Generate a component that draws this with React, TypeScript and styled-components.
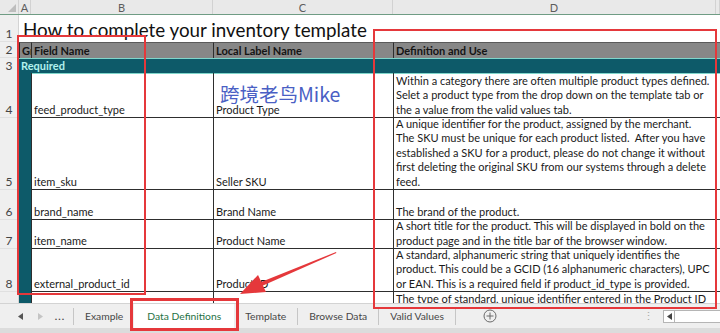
import React from 'react';
import styled, { createGlobalStyle } from 'styled-components';

const COLS = '19px 12px 182px 180px 323px 4px';
const TEAL = '#0d5a69';
const RED = '#e5383b';

const GlobalStyle = createGlobalStyle`
  html, body { margin: 0; padding: 0; background: #fff; }
  body { font-family: Lato, "Liberation Sans", sans-serif; }
`;

const Window = styled.div`
  position: relative;
  width: 720px;
  height: 333px;
  overflow: hidden;
  display: flex;
  flex-direction: column;
  background: #fff;
`;

const ColumnHeader = styled.div`
  flex: none;
  display: grid;
  grid-template-columns: ${COLS};
  height: 15px;
  box-sizing: border-box;
  background: #e9e9e9;
  border-bottom: 1px solid #6f9c84;
`;

const Corner = styled.div`
  position: relative;
  border-right: 1px solid #d2d2d2;
  &::after {
    content: '';
    position: absolute;
    right: 2px;
    bottom: 2px;
    border-left: 8px solid transparent;
    border-bottom: 8px solid #bdbdbd;
  }
`;

const ColLetter = styled.div`
  font-size: 11px;
  line-height: 15px;
  color: #5c5c5c;
  text-align: center;
  border-right: 1px solid #d2d2d2;
  overflow: hidden;
`;

const Sheet = styled.div`
  flex: 1;
  overflow: hidden;
`;

const Row = styled.div<{ $h: number }>`
  display: grid;
  grid-template-columns: ${COLS};
  height: ${(p) => p.$h}px;
`;

const RowNum = styled.div`
  display: flex;
  align-items: flex-end;
  justify-content: center;
  background: #efefef;
  color: #444;
  font-size: 12px;
  line-height: 15px;
  border-right: 1px solid #d4d4d4;
  border-bottom: 1px solid #e0e0e0;
  box-sizing: border-box;
`;

const TitleCell = styled.div`
  grid-column: 2 / -1;
  display: flex;
  align-items: flex-end;
  padding-left: 4px;
  font-size: 18.8px;
  line-height: 24px;
  color: #111;
  white-space: nowrap;
`;

const HeadCell = styled.div`
  background: #878787;
  color: #141414;
  font-weight: 700;
  font-size: 11px;
  line-height: 15px;
  padding-left: 2px;
  border-top: 1px solid #5a5a5a;
  border-left: 1px solid #2e2e2e;
  box-sizing: border-box;
  white-space: nowrap;
  overflow: hidden;
`;

const BandCell = styled.div`
  grid-column: 2 / -1;
  background: ${TEAL};
  color: #b3f1ee;
  font-weight: 700;
  font-size: 11px;
  line-height: 13px;
  padding-left: 2px;
  border-top: 1px solid #7fd6cb;
  border-bottom: 1px solid #7fd6cb;
`;

const Stripe = styled.div`
  background: ${TEAL};
`;

const DataCell = styled.div<{ $top?: boolean }>`
  display: flex;
  flex-direction: column;
  justify-content: ${(p) => (p.$top ? 'flex-start' : 'flex-end')};
  padding: 0 2px;
  border-left: 1px solid #2e2e2e;
  border-bottom: 1px solid #2e2e2e;
  box-sizing: border-box;
  font-size: 11px;
  line-height: 14.5px;
  color: #1a1a1a;
  white-space: nowrap;
  overflow: hidden;
`;

const TabBar = styled.div`
  flex: none;
  height: 25px;
  display: flex;
  align-items: stretch;
  background: #efefef;
  border-top: 1px solid #d3d3d3;
  box-sizing: border-box;
  font-size: 10.3px;
  color: #474747;
`;

const NavZone = styled.div`
  display: flex;
  align-items: center;
  padding-left: 10px;
`;

const NavBtn = styled.div`
  width: 20px;
  display: flex;
  justify-content: center;
  align-items: center;
  font-weight: 700;
  letter-spacing: 1px;
`;

const Sep = styled.div`
  width: 1px;
  align-self: center;
  height: 17px;
  background: #c6c6c6;
`;

const Tab = styled.div<{ $active?: boolean }>`
  display: flex;
  align-items: center;
  padding: 0 ${(p) => (p.$active ? 13 : 11)}px;
  background: ${(p) => (p.$active ? '#fff' : 'transparent')};
  color: ${(p) => (p.$active ? '#1f7245' : '#474747')};
  white-space: nowrap;
`;

const AddSheet = styled.div`
  display: flex;
  align-items: center;
  margin-left: 27px;
`;

const Grow = styled.div`
  flex: 1;
`;

const Dots = styled.div`
  display: flex;
  align-items: center;
  color: #aaa;
  font-size: 11px;
  margin-right: 9px;
`;

const ScrollBox = styled.div`
  align-self: center;
  width: 57px;
  height: 13px;
  display: flex;
  background: #fff;
  border: 1px solid #b5b5b5;
  border-right: none;
  box-sizing: border-box;
`;

const ScrollArrow = styled.div`
  width: 10px;
  display: flex;
  align-items: center;
  justify-content: center;
  border-right: 1px solid #b5b5b5;
`;

const StatusStrip = styled.div`
  flex: none;
  height: 5px;
  background: #dcdcdc;
`;

const Overlay = styled.svg`
  position: absolute;
  left: 0;
  top: 0;
  pointer-events: none;
`;

const RedBox = styled.div<{ $x: number; $y: number; $w: number; $h: number; $t: number }>`
  position: absolute;
  left: ${(p) => p.$x}px;
  top: ${(p) => p.$y}px;
  width: ${(p) => p.$w}px;
  height: ${(p) => p.$h}px;
  border: ${(p) => p.$t}px solid ${RED};
  box-sizing: border-box;
  pointer-events: none;
`;

const Watermark = styled.div`
  position: absolute;
  left: 220px;
  top: 79px;
  font-family: "Noto Sans CJK SC", "Noto Sans", sans-serif;
  font-size: 19.5px;
  color: #4a5fc4;
  white-space: nowrap;
  pointer-events: none;
`;

const Triangle = ({ dir, color }: { dir: 'left' | 'right'; color: string }) => (
  <svg width="5" height="7" viewBox="0 0 5 7">
    <polygon points={dir === 'left' ? '5,0 0,3.5 5,7' : '0,0 5,3.5 0,7'} fill={color} />
  </svg>
);

type DataRow = { n: number; h: number; field: string; label: string; def: string[]; top?: boolean };

const rows: DataRow[] = [
  {
    n: 4,
    h: 45,
    field: 'feed_product_type',
    label: 'Product Type',
    def: [
      'Within a category there are often multiple product types defined.',
      'Selet a product type from the drop down on the template tab or',
      'the a value from the valid values tab.',
    ],
  },
  {
    n: 5,
    h: 72,
    field: 'item_sku',
    label: 'Seller SKU',
    def: [
      'A unique identifier for the product, assigned by the merchant.',
      'The SKU must be unique for each product listed.\u00a0 After you have',
      'established a SKU for a product, please do not change it without',
      'first deleting the original SKU from our systems through a delete',
      'feed.',
    ],
  },
  { n: 6, h: 30, field: 'brand_name', label: 'Brand Name', def: ['The brand of the product.'] },
  {
    n: 7,
    h: 29,
    field: 'item_name',
    label: 'Product Name',
    def: [
      'A short title for the product. This will be displayed in bold on the',
      'product page and in the title bar of the browser window.',
    ],
  },
  {
    n: 8,
    h: 43,
    field: 'external_product_id',
    label: 'Product ID',
    def: [
      'A standard, alphanumeric string that uniquely identifies the',
      'product. This could be a GCID (16 alphanumeric characters), UPC',
      'or EAN. This is a required field if product_id_type is provided.',
    ],
  },
  {
    n: 9,
    h: 44,
    field: '',
    label: '',
    top: true,
    def: ['The type of standard, unique identifier entered in the Product ID', 'field.'],
  },
];

const App = () => (
  <Window>
    <GlobalStyle />
    <ColumnHeader>
      <Corner />
      <ColLetter>A</ColLetter>
      <ColLetter>B</ColLetter>
      <ColLetter>C</ColLetter>
      <ColLetter>D</ColLetter>
      <ColLetter />
    </ColumnHeader>

    <Sheet>
      <Row $h={27}>
        <RowNum>1</RowNum>
        <TitleCell>How to complete your inventory template</TitleCell>
      </Row>
      <Row $h={16}>
        <RowNum>2</RowNum>
        <HeadCell>Group</HeadCell>
        <HeadCell>Field Name</HeadCell>
        <HeadCell>Local Label Name</HeadCell>
        <HeadCell>Definition and Use</HeadCell>
        <HeadCell />
      </Row>
      <Row $h={15}>
        <RowNum>3</RowNum>
        <BandCell>Required</BandCell>
      </Row>
      {rows.map((r) => (
        <Row key={r.n} $h={r.h}>
          <RowNum>{r.n}</RowNum>
          <Stripe />
          <DataCell $top={r.top}>{r.field}</DataCell>
          <DataCell $top={r.top}>{r.label}</DataCell>
          <DataCell $top={r.top}>
            {r.def.map((line) => (
              <div key={line}>{line}</div>
            ))}
          </DataCell>
          <DataCell />
        </Row>
      ))}
    </Sheet>

    <TabBar>
      <NavZone>
        <NavBtn>
          <Triangle dir="left" color="#555" />
        </NavBtn>
        <NavBtn>
          <Triangle dir="right" color="#c4c4c4" />
        </NavBtn>
        <NavBtn>...</NavBtn>
      </NavZone>
      <Sep style={{ marginLeft: 3 }} />
      <Tab>Example</Tab>
      <Tab $active>Data Definitions</Tab>
      <Tab>Template</Tab>
      <Sep />
      <Tab>Browse Data</Tab>
      <Sep />
      <Tab>Valid Values</Tab>
      <Sep />
      <AddSheet>
        <svg width="14" height="14" viewBox="0 0 14 14">
          <circle cx="7" cy="7" r="6" fill="none" stroke="#6a6a6a" strokeWidth="1" />
          <path d="M7 3.5v7M3.5 7h7" stroke="#6a6a6a" strokeWidth="1" />
        </svg>
      </AddSheet>
      <Grow />
      <Dots>⋮</Dots>
      <ScrollBox>
        <ScrollArrow>
          <Triangle dir="left" color="#444" />
        </ScrollArrow>
      </ScrollBox>
    </TabBar>
    <StatusStrip />

    <Watermark>跨境老鸟Mike</Watermark>
    <RedBox $x={17} $y={35} $w={129} $h={260} $t={2} />
    <RedBox $x={373} $y={29} $w={344} $h={280} $t={2} />
    <RedBox $x={130} $y={298} $w={109} $h={33} $t={3} />
    <Overlay width="720" height="333" viewBox="0 0 720 333">
      <polygon points="336,252 336.4,253 260.8,286.6 259.2,282.8" fill={RED} />
      <polygon points="240,294 258,275 266,292" fill={RED} />
    </Overlay>
  </Window>
);

export default App;
